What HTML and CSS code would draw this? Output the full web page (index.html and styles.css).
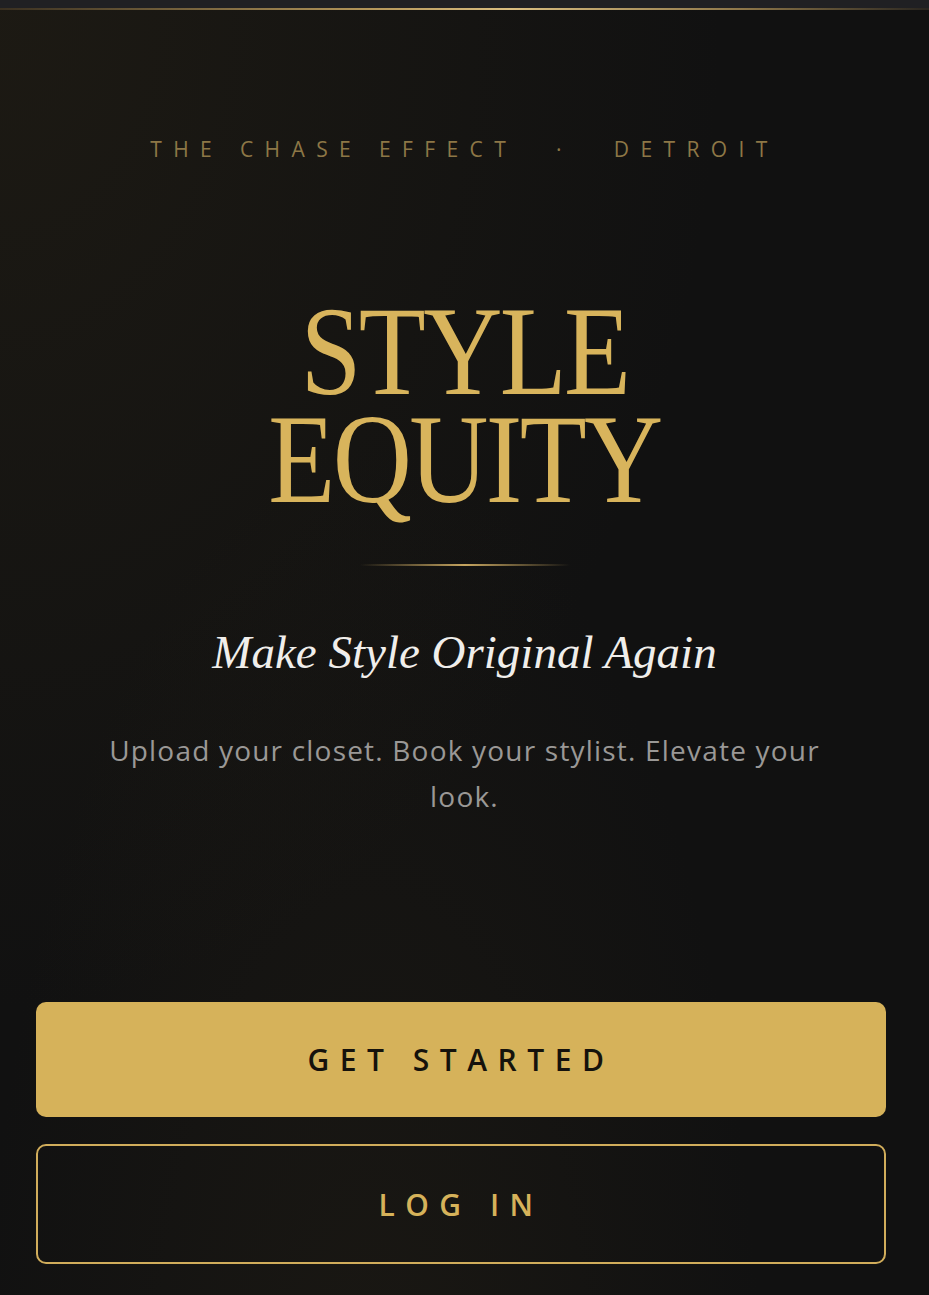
FILE: index.html
```html
<!DOCTYPE html>
<html lang="en">
<head>
    <meta charset="UTF-8">
    <meta name="viewport" content="width=device-width, initial-scale=1.0">
    <title>Style Equity - Welcome</title>
    <link rel="stylesheet" href="styles.css">
</head>
<body>
    <div class="status-bar"></div>
    <div class="gold-rule"></div>

    <main class="screen">
        <section class="hero">
            <p class="eyebrow">The Chase Effect <span class="dot">&middot;</span> Detroit</p>
            <h1 class="title">Style<br>Equity</h1>
            <div class="divider"></div>
            <h2 class="tagline">Make Style Original Again</h2>
            <p class="intro">Upload your closet. Book your stylist. Elevate your look.</p>
        </section>

        <div class="actions">
            <a href="#" class="btn btn-primary">Get Started</a>
            <a href="#" class="btn btn-outline">Log In</a>
        </div>
    </main>
</body>
</html>
```

FILE: styles.css
```css
html, body {
    height: 100%;
}
body {
    font-family: 'Open Sans', 'DejaVu Sans', sans-serif;
    margin: 0;
    display: flex;
    flex-direction: column;
    background-color: #111111;
    color: #eeeeee;
}
.status-bar {
    height: 8px;
    background-color: #202023;
}
.gold-rule {
    height: 2px;
    background: linear-gradient(90deg, #3a3021 0%, #b4965a 40%, #d9bd80 55%, #8d7649 80%, #2a2620 100%);
}
.screen {
    flex: 1;
    display: flex;
    flex-direction: column;
    background:
        radial-gradient(ellipse at 0% 0%, rgba(50, 42, 24, 0.35) 0%, rgba(20, 18, 14, 0) 55%),
        radial-gradient(ellipse at 40% 115%, rgba(40, 34, 22, 0.4) 0%, rgba(17, 17, 17, 0) 50%),
        #111111;
}
.hero {
    display: flex;
    flex-direction: column;
    align-items: center;
    text-align: center;
    padding-top: 127px;
}
.eyebrow {
    margin: 0;
    font-size: 21px;
    line-height: 24px;
    letter-spacing: 11.4px;
    text-transform: uppercase;
    color: #8d7746;
}
.eyebrow .dot {
    margin: 0 24px 0 22px;
}
.title {
    margin: 137px 0 0;
    font-family: 'Liberation Serif', 'Times New Roman', serif;
    font-weight: 400;
    font-size: 126px;
    line-height: 108px;
    letter-spacing: -3px;
    text-transform: uppercase;
    color: #d8b45c;
    transform: scaleX(0.87);
}
.divider {
    width: 210px;
    height: 2px;
    margin-top: 50px;
    background: linear-gradient(90deg, rgba(200, 165, 90, 0) 0%, #c6a560 50%, rgba(200, 165, 90, 0) 100%);
}
.tagline {
    margin: 57px 0 0;
    font-family: 'Liberation Serif', 'Times New Roman', serif;
    font-style: italic;
    font-weight: 400;
    font-size: 47px;
    line-height: 58px;
    color: #f0eeeb;
}
.intro {
    max-width: 760px;
    margin: 46px 0 0;
    font-size: 28px;
    line-height: 46px;
    letter-spacing: 1.2px;
    color: #9a9896;
}
.actions {
    margin-top: auto;
    padding: 0 43px 31px 36px;
    display: flex;
    flex-direction: column;
    gap: 27px;
}
.btn {
    display: flex;
    align-items: center;
    justify-content: center;
    box-sizing: border-box;
    border-radius: 10px;
    font-weight: 600;
    font-size: 30px;
    letter-spacing: 10.5px;
    text-transform: uppercase;
    text-decoration: none;
}
.btn-primary {
    height: 115px;
    background-color: #d6b25a;
    color: #15120c;
}
.btn-outline {
    height: 120px;
    border: 2px solid #d1ad5b;
    color: #d6b25a;
}
```
